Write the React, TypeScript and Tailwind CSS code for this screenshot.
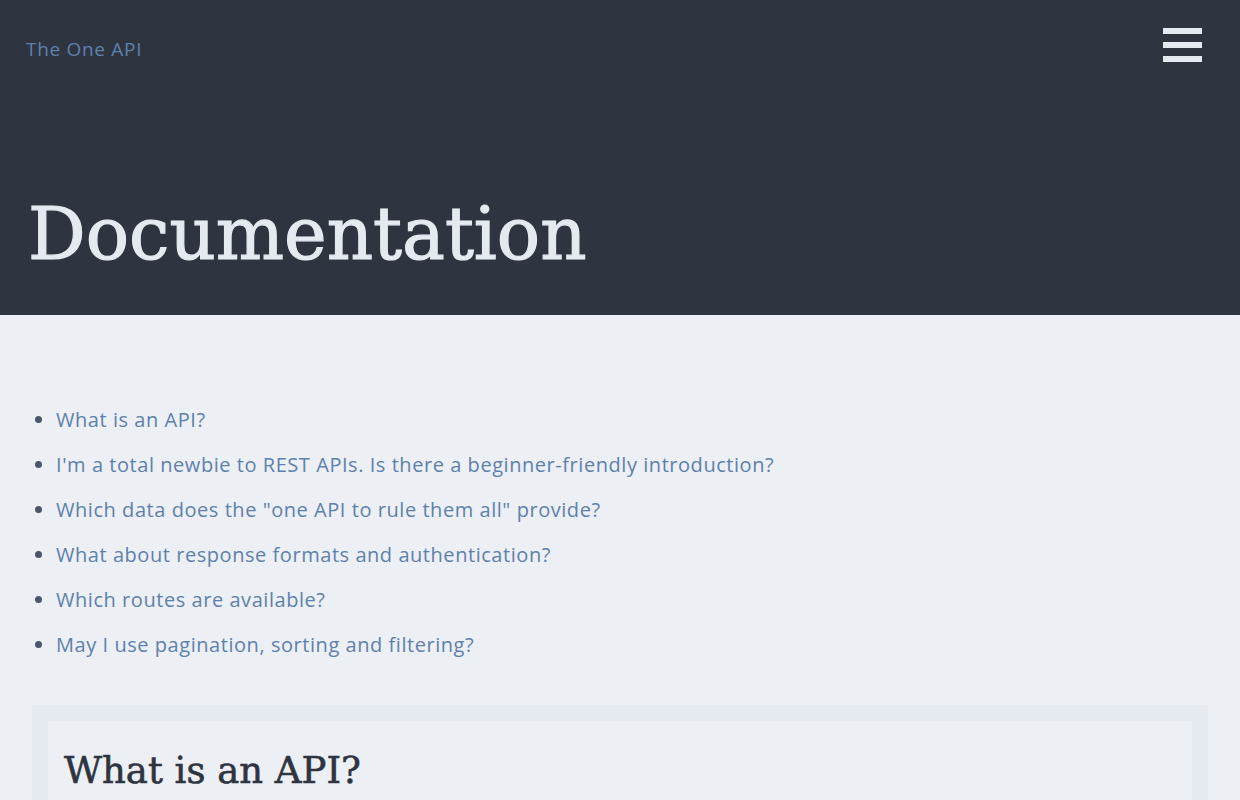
// Documentation page
const questions = [
  'What is an API?',
  "I'm a total newbie to REST APIs. Is there a beginner-friendly introduction?",
  'Which data does the "one API to rule them all" provide?',
  'What about response formats and authentication?',
  'Which routes are available?',
  'May I use pagination, sorting and filtering?',
];

const sans = "font-['Open_Sans',sans-serif]";
const serif = "font-['DejaVu_Serif',serif]";

function Header() {
  return (
    <header className="h-[315px] bg-[#2e3440] flex flex-col">
      <nav className="flex items-start justify-between pl-[26px] pr-[38px] pt-[26px]">
        <a href="#" className={`${sans} mt-[10px] text-[19px] leading-[26px] tracking-[0.7px] text-[#5e81ac]`}>
          The One API
        </a>
        <button className="flex flex-col gap-[8px] pt-[2px]" aria-label="menu">
          <span className="block w-[39px] h-[6px] bg-[#e5e9f0]" />
          <span className="block w-[39px] h-[6px] bg-[#e5e9f0]" />
          <span className="block w-[39px] h-[6px] bg-[#e5e9f0]" />
        </button>
      </nav>
      <h1
        className={`${serif} mt-auto mb-[41px] pl-[28px] text-[72px] leading-[80px] text-[#e5e9f0] [-webkit-text-stroke:1.2px_#e5e9f0]`}
      >
        Documentation
      </h1>
    </header>
  );
}

export default function App() {
  return (
    <div className="min-h-screen bg-[#eceff4]">
      <Header />
      <main className="px-[32px] pt-[91px]">
        <ul className="list-disc pl-[24px] marker:text-[#4c566a] space-y-[17px]">
          {questions.map((q) => (
            <li key={q} className={`${sans} text-[20px] leading-[28px] tracking-[0.55px]`}>
              <a href="#" className="text-[#5e81ac]">{q}</a>
            </li>
          ))}
        </ul>
        <section className="mt-[46px] bg-[#e5e9f0] p-[16px]">
          <div className="bg-[#eceff4] px-[16px] pt-[26px] pb-[40px]">
            <h2
              className={`${serif} text-[37px] leading-[48px] text-[#2e3440] [-webkit-text-stroke:0.6px_#2e3440]`}
            >
              What is an API?
            </h2>
          </div>
        </section>
      </main>
    </div>
  );
}
